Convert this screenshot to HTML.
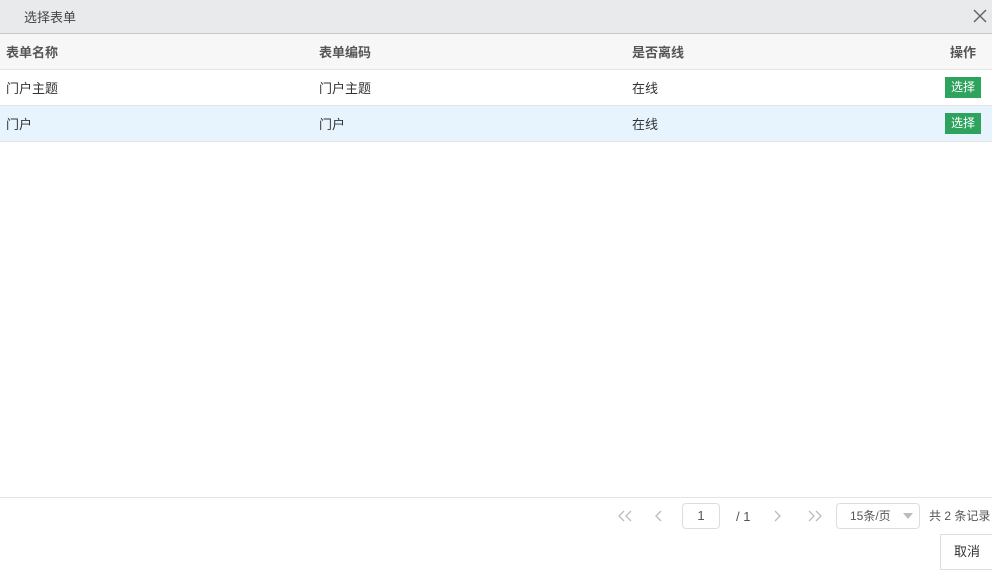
<!DOCTYPE html>
<html><head><meta charset="utf-8"><style>
*{margin:0;padding:0;box-sizing:border-box}
body{width:992px;height:568px;background:#fff;font-family:"Liberation Sans","Noto Sans CJK SC",sans-serif;font-size:13px;color:#333;position:relative;overflow:hidden}
.title{height:34px;background:#e9eaec;border-bottom:1px solid #c8c8c8;position:relative}
.title span{position:absolute;left:24px;top:7px;font-size:13px;color:#444}
.x{position:absolute;left:972px;top:8px}
.row{position:absolute;left:0;width:992px;height:36px;border-bottom:1px solid #e4e4e4}
.row div{position:absolute;top:8px}
.hd{top:34px;background:#f7f7f7;font-weight:bold;color:#555}
.btn{position:absolute;left:945px;top:7px!important;width:36px;height:21px;background:#2ea35e;color:#fff;font-size:12px;text-align:center;line-height:21px}
.c1{left:6px}.c2{left:319px}.c3{left:632px}
.foot{position:absolute;left:0;top:497px;width:992px;border-top:1px solid #e4e4e4}
.pg{position:absolute;top:503px;height:26px;color:#555}
</style></head><body>
<div class="title"><span>选择表单</span>
<svg class="x" width="16" height="16" viewBox="0 0 16 16"><path d="M2 2L14 14M14 2L2 14" stroke="#666" stroke-width="1.5"/></svg></div>
<div class="row hd"><div class="c1">表单名称</div><div class="c2">表单编码</div><div class="c3">是否离线</div><div style="left:950px">操作</div></div>
<div class="row" style="top:70px"><div class="c1">门户主题</div><div class="c2">门户主题</div><div class="c3">在线</div><div class="btn">选择</div></div>
<div class="row" style="top:106px;background:#e7f4fd"><div class="c1">门户</div><div class="c2">门户</div><div class="c3">在线</div><div class="btn">选择</div></div>
<div class="foot"></div>
<svg style="position:absolute;left:616px;top:508px" width="18" height="16"><path d="M8 3L3 8L8 13M15 3L10 8L15 13" stroke="#bbb" fill="none" stroke-width="1.3"/></svg>
<svg style="position:absolute;left:652px;top:508px" width="12" height="16"><path d="M9 3L4 8L9 13" stroke="#bbb" fill="none" stroke-width="1.3"/></svg>
<div class="pg" style="left:682px;width:38px;border:1px solid #ddd;border-radius:4px;text-align:center;line-height:24px">1</div>
<div class="pg" style="left:736px;line-height:28px">/ 1</div>
<svg style="position:absolute;left:772px;top:508px" width="12" height="16"><path d="M3 3L8 8L3 13" stroke="#bbb" fill="none" stroke-width="1.3"/></svg>
<svg style="position:absolute;left:806px;top:508px" width="18" height="16"><path d="M3 3L8 8L3 13M10 3L15 8L10 13" stroke="#bbb" fill="none" stroke-width="1.3"/></svg>
<div class="pg" style="left:836px;width:84px;border:1px solid #ddd;border-radius:4px;line-height:24px;padding-left:13px;font-size:12px">15条/页
<svg style="position:absolute;left:66px;top:9px" width="10" height="6"><path d="M0 0H10L5 6Z" fill="#bbb"/></svg></div>
<div class="pg" style="left:929px;line-height:26px;font-size:12px">共 2 条记录</div>
<div style="position:absolute;left:940px;top:534px;width:60px;height:36px;border:1px solid #ddd;line-height:34px;padding-left:13px;color:#333">取消</div>
</body></html>
